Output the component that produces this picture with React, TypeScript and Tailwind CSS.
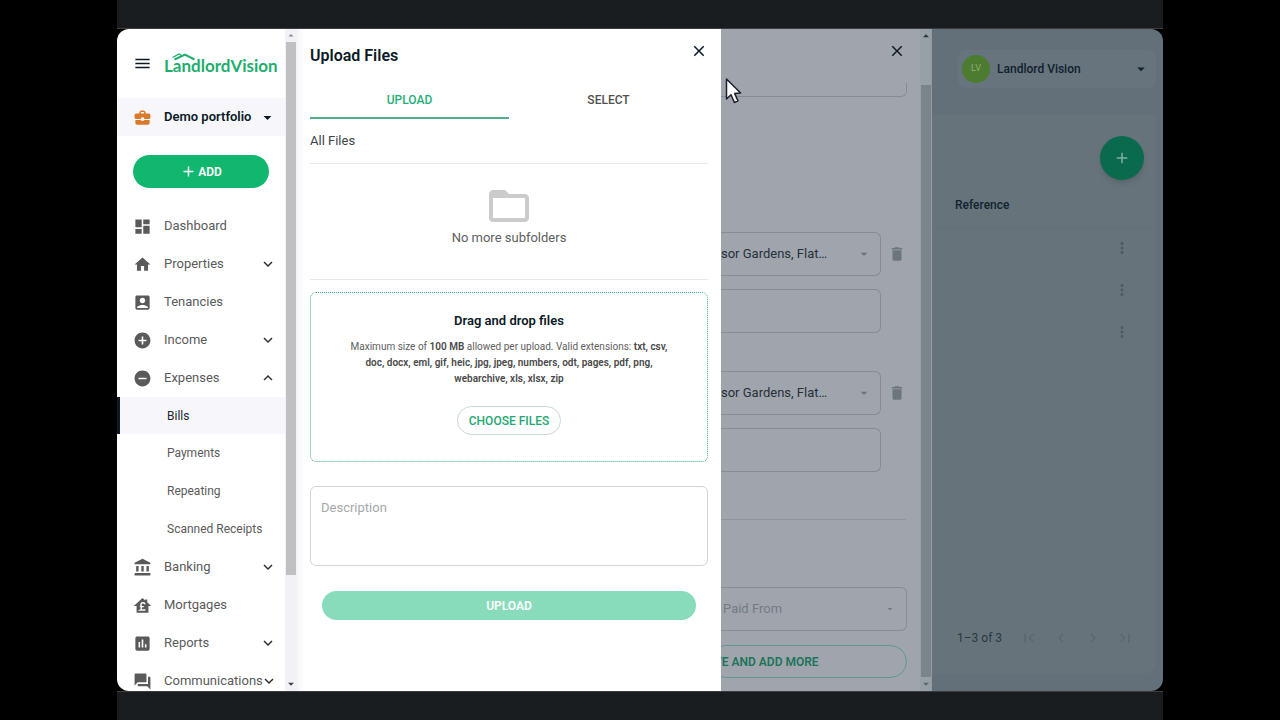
import type { ReactNode } from 'react';
import type { IconType } from 'react-icons';
import {
  MdAccountBalance,
  MdAccountBox,
  MdAdd,
  MdAddCircle,
  MdArrowDropDown,
  MdArrowDropUp,
  MdAssessment,
  MdBusinessCenter,
  MdChevronLeft,
  MdChevronRight,
  MdClose,
  MdDashboard,
  MdDelete,
  MdExpandLess,
  MdExpandMore,
  MdFirstPage,
  MdFolderOpen,
  MdHome,
  MdLastPage,
  MdMenu,
  MdMoreVert,
  MdQuestionAnswer,
  MdRemoveCircle,
} from 'react-icons/md';

function MortgageIcon({ className }: { className?: string }) {
  return (
    <svg viewBox="0 0 24 24" className={className} fill="currentColor" aria-hidden="true">
      <path d="M12 2.500 1 12.500h3.500V21h15v-8.500H23L18 8V4.500h-2.500v1.200z" />
      <path
        d="M15.300 10.300c-.5-1.300-1.700-1.900-3-1.800-1.700.1-2.600 1.400-2.300 2.900l.6 2.400c.3 1.500-.1 3-1.500 3.900h6.600M8.600 13.500h5"
        fill="none"
        stroke="white"
        strokeWidth="1.700"
      />
    </svg>
  );
}

type Item = { label: string; icon: IconType | typeof MortgageIcon; menu?: 'open' | 'closed'; children?: string[] };

const items: Item[] = [
  { label: 'Dashboard', icon: MdDashboard },
  { label: 'Properties', icon: MdHome, menu: 'closed' },
  { label: 'Tenancies', icon: MdAccountBox },
  { label: 'Income', icon: MdAddCircle, menu: 'closed' },
  { label: 'Expenses', icon: MdRemoveCircle, menu: 'open', children: ['Bills', 'Payments', 'Repeating', 'Scanned Receipts'] },
  { label: 'Banking', icon: MdAccountBalance, menu: 'closed' },
  { label: 'Mortgages', icon: MortgageIcon },
  { label: 'Reports', icon: MdAssessment, menu: 'closed' },
  { label: 'Communications', icon: MdQuestionAnswer, menu: 'closed' },
];

function Logo() {
  return (
    <a href="#" className="relative ml-3 pt-1 font-['Lato',sans-serif] text-[17px] leading-6 font-bold text-[#1fae6e]">
      LandlordVision
      <svg viewBox="0 0 24 8" className="absolute top-[3px] left-2 h-2 w-6" fill="none" stroke="currentColor" aria-hidden="true">
        <path d="M2.500 6.500 13 1.500 22.500 6.500" strokeWidth="2" />
        <path d="M.5 4.500 7 1l2.500 1.300" strokeWidth="1.400" />
      </svg>
    </a>
  );
}

function Sidebar() {
  return (
    <aside className="flex w-42 shrink-0 flex-col overflow-hidden bg-white">
      <div className="flex h-[69px] shrink-0 items-center pl-4">
        <button aria-label="Toggle menu" className="text-[#0b1a26]">
          <MdMenu className="size-[19px]" />
        </button>
        <Logo />
      </div>
      <button className="flex h-[38px] shrink-0 items-center bg-[#f6f6fb] pr-2 pl-4 text-[#0b1a26]">
        <MdBusinessCenter className="size-[19px] text-[#d97a2b]" />
        <span className="ml-3 flex-1 text-left text-[13px] font-semibold">Demo portfolio</span>
        <MdArrowDropDown className="size-[19px]" />
      </button>
      <button className="mx-4 mt-[19px] flex h-[33px] shrink-0 items-center justify-center gap-px rounded-full bg-[#12b76f] text-xs font-semibold text-white">
        <MdAdd className="size-[17px]" />
        ADD
      </button>
      <nav className="mt-[19px] text-[#5a5a5a]">
        {items.map(({ label, icon: Icon, menu, children }) => (
          <div key={label}>
            <a href="#" className="flex h-[38px] items-center pr-2 pl-4 text-[13px] whitespace-nowrap">
              <Icon className="size-[19px] shrink-0" />
              <span className="ml-3 w-24 flex-1">{label}</span>
              {menu === 'closed' && <MdExpandMore className="size-[18px] shrink-0 text-[#303030]" />}
              {menu === 'open' && <MdExpandLess className="size-[18px] shrink-0 text-[#303030]" />}
            </a>
            {children?.map((child) => (
              <a
                key={child}
                href="#"
                className={
                  child === 'Bills'
                    ? 'flex h-[37px] items-center border-l-3 border-[#0b1a26] bg-[#f6f6fb] pl-[47px] text-xs text-[#20262d]'
                    : 'flex h-[38px] items-center border-l-3 border-transparent pl-[47px] text-xs'
                }
              >
                {child}
              </a>
            ))}
          </div>
        ))}
      </nav>
    </aside>
  );
}

function SidebarScroll() {
  return (
    <div aria-hidden="true" className="flex w-3 shrink-0 flex-col items-center bg-[#f3f1f5]">
      <MdArrowDropUp className="h-[13px] w-3 text-[#8a8a8a]" />
      <div className="w-[10px] flex-1 bg-[#c1bfc2]" />
      <div className="flex h-[116px] items-end">
        <MdArrowDropDown className="size-[14px] text-[#404040]" />
      </div>
    </div>
  );
}

function UploadPanel() {
  return (
    <section className="flex w-[424px] shrink-0 flex-col bg-linear-to-r from-[#f8f6fa] to-white to-2% px-[13px]">
      <header className="flex h-[52px] items-center justify-between">
        <h1 className="pt-0.5 text-base font-semibold text-[#0b1a26]">Upload Files</h1>
        <button aria-label="Close upload" className="-mt-2 text-[#0b1a26]">
          <MdClose className="size-[18px]" />
        </button>
      </header>
      <div role="tablist" className="grid h-[38px] grid-cols-2 text-xs font-medium">
        <button role="tab" aria-selected="true" className="border-b-2 border-[#4fb08b] pt-0.5 text-[#1fae76]">
          UPLOAD
        </button>
        <button role="tab" aria-selected="false" className="border-b-2 border-transparent pt-0.5 text-[#505050]">
          SELECT
        </button>
      </div>
      <h2 className="flex h-[45px] items-center border-b border-[#e6e8ea] text-[13px] text-[#404448]">All Files</h2>
      <div className="flex h-[116px] flex-col items-center border-b border-[#e6e8ea] pt-[18px] text-[13px] leading-4 text-[#606060]">
        <MdFolderOpen className="size-12 text-[#cbcbcb]" />
        <p>No more subfolders</p>
      </div>
      <div className="mt-3 flex h-[170px] flex-col items-center rounded-md border border-dotted border-[#3fae86] px-8 pt-[18px] text-center">
        <h3 className="text-[13px] leading-5 font-semibold text-[#0b1a26]">Drag and drop files</h3>
        <p className="mt-2 text-[10px] leading-4 text-[#606060] [&>b]:font-semibold [&>b]:text-[#4a4a4a]">
          Maximum size of <b>100 MB</b> allowed per upload. Valid extensions:{' '}
          <b>txt, csv, doc, docx, eml, gif, heic, jpg, jpeg, numbers, odt, pages, pdf, png, webarchive, xls, xlsx, zip</b>
        </p>
        <button className="mt-[19px] h-[29px] rounded-full border border-[#c4dbd2] px-[11px] text-xs font-medium text-[#1fa873]">
          CHOOSE FILES
        </button>
      </div>
      <textarea
        aria-label="Description"
        placeholder="Description"
        className="mt-6 h-20 resize-none rounded-md border border-[#d2d4d6] px-[10px] py-[11px] text-[13px] leading-5 placeholder:text-[#a6a8aa]"
      />
      <button className="mx-3 mt-[25px] h-[29px] rounded-full bg-[#89dcbb] text-xs font-semibold text-white">UPLOAD</button>
    </section>
  );
}

function Field({ children }: { children?: ReactNode }) {
  return (
    <div className="relative flex h-11 w-40 shrink-0 items-center rounded-r-md border border-l-0 border-[#858d94]">{children}</div>
  );
}

function PropertyRow() {
  return (
    <div className="flex flex-col gap-[13px]">
      <div className="flex items-center">
        <Field>
          <select aria-label="Property" className="w-full appearance-none text-[13px] text-[#263039]">
            <option>sor Gardens, Flat…</option>
          </select>
          <MdArrowDropDown className="pointer-events-none absolute right-2 size-4 text-[#6c757c]" />
        </Field>
        <button aria-label="Delete row" className="ml-[7px] text-[#6c757c]">
          <MdDelete className="size-[18px]" />
        </button>
      </div>
      <Field>
        <input aria-label="Details" className="w-full outline-none" />
      </Field>
    </div>
  );
}

function BillDrawer() {
  return (
    <section className="flex w-[211px] shrink-0 overflow-hidden bg-[#a0a5ad]">
      <div className="flex min-w-0 flex-1 flex-col">
        <div className="flex h-[54px] shrink-0 justify-end pt-[13px] pr-[14px]">
          <button aria-label="Close bill" className="h-[18px] text-[#101b24]">
            <MdClose className="size-[18px]" />
          </button>
        </div>
        <div className="mr-[13px] h-[14px] shrink-0 rounded-br-md border-r border-b border-[#858d94]" />
        <div className="mt-[135px] flex flex-col gap-[38px]">
          <PropertyRow />
          <PropertyRow />
        </div>
        <hr className="mt-[47px] mr-[14px] border-[#8d949b]" />
        <div className="relative mt-[67px] mr-[13px] flex h-11 shrink-0 items-center rounded-r-md border border-l-0 border-[#858d94]">
          <select aria-label="Paid From" className="w-full appearance-none pl-0.5 text-[13px] text-[#737b83]">
            <option>Paid From</option>
          </select>
          <MdArrowDropDown className="pointer-events-none absolute right-[10px] size-3 text-[#737b83]" />
        </div>
        <button className="mt-[14px] mr-[13px] -ml-3 h-[33px] shrink-0 rounded-full border border-[#5c9a86] pl-1 text-left text-xs font-semibold text-[#1c7459]">
          VE AND ADD MORE
        </button>
      </div>
      <div aria-hidden="true" className="flex w-3 shrink-0 flex-col items-center border-r border-[#929ba2] bg-[#98a0a7]">
        <div className="h-14">
          <MdArrowDropUp className="size-[14px] text-[#27323a]" />
        </div>
        <div className="w-[10px] flex-1 bg-[#7b848b]" />
        <MdArrowDropDown className="size-[14px] text-[#5a636a]" />
      </div>
    </section>
  );
}

function BillsTable() {
  return (
    <main className="flex min-w-0 flex-1 flex-col bg-[#63707a] pr-[7px] pb-[17px]">
      <div className="mt-[21px] ml-[26px] flex h-[38px] shrink-0 items-center rounded-lg bg-[#67747d] pr-[6px] pl-1 text-[#10212e]">
        <span className="flex size-7 items-center justify-center rounded-full bg-[#4c7c2f] text-[9px] text-[#8fae7b]">LV</span>
        <button className="flex flex-1 items-center justify-between pl-[7px] text-xs font-medium">
          Landlord Vision
          <MdArrowDropDown className="size-[18px]" />
        </button>
      </div>
      <div className="mt-[27px] flex flex-1 flex-col rounded-br-xl bg-[#66737b]">
        <div className="flex justify-end pt-[21px] pr-3">
          <button aria-label="Add bill" className="flex size-11 items-center justify-center rounded-full bg-[#0a6a4e] text-[#7fb0a0] shadow-md">
            <MdAdd className="size-[18px]" />
          </button>
        </div>
        <table className="w-full text-xs text-[#13232f]">
          <thead>
            <tr className="h-[47px] border-b border-[#626f78]">
              <th scope="col" className="pt-1 pl-[23px] text-left font-medium">
                Reference
              </th>
              <th scope="col" aria-label="Actions" />
            </tr>
          </thead>
          <tbody>
            {[1, 2, 3].map((row) => (
              <tr key={row} className="h-[42px]">
                <td />
                <td className="pr-[25px] text-right">
                  <button aria-label="Row actions" className="align-middle text-[#4d5a64]">
                    <MdMoreVert className="size-[18px]" />
                  </button>
                </td>
              </tr>
            ))}
          </tbody>
        </table>
        <div className="mt-auto flex h-[72px] items-center pr-[22px] pl-[25px] text-xs text-[#2a3842]">
          <span className="flex-1">1–3 of 3</span>
          <div className="flex gap-[14px] text-[#5a6771]">
            <button aria-label="First page"><MdFirstPage className="size-[18px]" /></button>
            <button aria-label="Previous page"><MdChevronLeft className="size-[18px]" /></button>
            <button aria-label="Next page"><MdChevronRight className="size-[18px]" /></button>
            <button aria-label="Last page"><MdLastPage className="size-[18px]" /></button>
          </div>
        </div>
      </div>
    </main>
  );
}

export default function App() {
  return (
    <div className="relative flex h-screen flex-col bg-black px-[117px] font-['Roboto',sans-serif]">
      <div className="h-[29px] shrink-0 border-b border-[#3a3e40] bg-[#191d1f]" />
      <div className="flex min-h-0 flex-1 overflow-hidden rounded-xl">
        <Sidebar />
        <SidebarScroll />
        <UploadPanel />
        <BillDrawer />
        <BillsTable />
      </div>
      <div className="h-[29px] shrink-0 border-t border-[#3a3e40] bg-[#191d1f]" />
      <svg viewBox="0 0 17 28" className="pointer-events-none absolute top-[77px] left-[725px] h-7 w-[17px]" aria-hidden="true">
        <path
          d="M1.500 2v20l4.500-4.200 3.400 7.700 3.600-1.600-3.400-7.500 6-.4z"
          fill="white"
          stroke="#1b1f2a"
          strokeWidth="1.500"
          strokeLinejoin="round"
        />
      </svg>
    </div>
  );
}
